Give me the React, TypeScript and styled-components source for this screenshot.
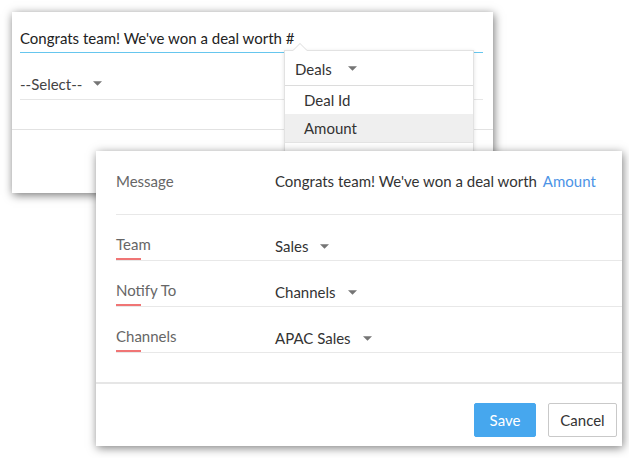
import styled, { createGlobalStyle } from 'styled-components';

const GlobalStyle = createGlobalStyle`
  html, body {
    margin: 0;
    padding: 0;
    background: #fff;
  }
  body {
    font-family: Lato, 'Open Sans', 'Liberation Sans', sans-serif;
    -webkit-font-smoothing: antialiased;
  }
`;

const Caret = () => (
  <CaretSvg viewBox="0 0 8 4" width="9" height="5">
    <path d="M0 0 L8 0 L4 4 Z" fill="currentColor" />
  </CaretSvg>
);

const formRows = [
  { label: 'Team', value: 'Sales' },
  { label: 'Notify To', value: 'Channels' },
  { label: 'Channels', value: 'APAC Sales' },
];

const App = () => {
  return (
    <>
      <GlobalStyle />
      <Stage>
        <BackPanel>
          <InputRow>Congrats team! We've won a deal worth #</InputRow>
          <SelectRow>
            --Select--
            <Caret />
          </SelectRow>
          <BackFooter />

          <Popup>
            <PopupHeader>
              Deals
              <Caret />
            </PopupHeader>
            <PopupItem>Deal Id</PopupItem>
            <PopupItem active>Amount</PopupItem>
            <PopupItem muted>Closing Date</PopupItem>
          </Popup>
        </BackPanel>

        <FrontPanel>
          <MessageRow>
            <Label>Message</Label>
            <MessageText>
              Congrats team! We've won a deal worth <Merge>Amount</Merge>
            </MessageText>
          </MessageRow>
          {formRows.map((row) => (
            <FieldRow key={row.label}>
              <FieldLabel>{row.label}</FieldLabel>
              <FieldValue>
                {row.value}
                <Caret />
              </FieldValue>
            </FieldRow>
          ))}
          <Spacer />
          <Footer>
            <Button primary>Save</Button>
            <Button>Cancel</Button>
          </Footer>
        </FrontPanel>
      </Stage>
    </>
  );
};

const Stage = styled.div`
  position: relative;
  width: 629px;
  height: 458px;
  overflow: hidden;
`;
const CaretSvg = styled.svg`
  color: #757575;
  margin-left: 12px;
  flex-shrink: 0;
`;
const BackPanel = styled.div`
  position: relative;
  margin: 12px 0 0 12px;
  width: 481px;
  height: 181px;
  background: #fff;
  box-shadow: 1px 2px 9px rgba(0, 0, 0, 0.55);
  display: flex;
  flex-direction: column;
  padding-top: 12px;
  box-sizing: border-box;
`;
const InputRow = styled.div`
  margin: 0 10px 0 8px;
  height: 29px;
  line-height: 18px;
  padding-top: 5px;
  box-sizing: border-box;
  border-bottom: 1px solid #66c6ee;
  color: #222;
  font-size: 15px;
`;
const SelectRow = styled.div`
  margin: 0 10px 0 8px;
  height: 47px;
  display: flex;
  align-items: flex-end;
  padding-bottom: 6px;
  box-sizing: border-box;
  border-bottom: 1px solid #e6e6e6;
  color: #444;
  font-size: 15px;
  line-height: 18px;
  svg {
    margin: 0 0 7px 11px;
  }
`;
const BackFooter = styled.div`
  margin-top: 29px;
  border-top: 1px solid #e2e2e2;
`;
const Popup = styled.div`
  position: absolute;
  left: 272px;
  top: 38px;
  width: 190px;
  height: 140px;
  background: #fff;
  border: 1px solid #e2e2e2;
  box-shadow: 0 1px 4px rgba(0, 0, 0, 0.12);
  box-sizing: border-box;

  &::before,
  &::after {
    content: '';
    position: absolute;
    left: 8px;
    width: 0;
    height: 0;
    border-left: 7px solid transparent;
    border-right: 7px solid transparent;
  }
  &::before {
    top: -8px;
    border-bottom: 7px solid #dcdcdc;
  }
  &::after {
    top: -7px;
    border-bottom: 7px solid #fff;
  }
`;
const PopupHeader = styled.div`
  height: 35px;
  padding: 1px 0 0 10px;
  display: flex;
  align-items: center;
  box-sizing: border-box;
  border-bottom: 1px solid #dcdcdc;
  font-size: 15px;
  color: #333;
  svg {
    margin-left: 16px;
  }
`;
const PopupItem = styled.div<{ active?: boolean; muted?: boolean }>`
  height: 28px;
  padding-left: 19px;
  display: flex;
  align-items: center;
  font-size: 15px;
  color: ${(props) => (props.muted ? '#999' : '#333')};
  background: ${(props) => (props.active ? '#efefef' : '#fff')};
  border-bottom: ${(props) => (props.active ? '1px solid #e4e4e4' : 'none')};
`;
const FrontPanel = styled.div`
  position: absolute;
  left: 96px;
  top: 151px;
  width: 526px;
  height: 295px;
  background: #fff;
  box-shadow: 1px 2px 9px rgba(0, 0, 0, 0.5);
  display: flex;
  flex-direction: column;
  padding-left: 20px;
  box-sizing: border-box;
`;
const MessageRow = styled.div`
  height: 64px;
  display: grid;
  grid-template-columns: 159px 1fr;
  padding-top: 21px;
  box-sizing: border-box;
  border-bottom: 1px solid #e8e8e8;
  line-height: 18px;
  font-size: 15px;
`;
const Label = styled.div`
  color: #666;
`;
const MessageText = styled.div`
  color: #333;
  white-space: nowrap;
`;
const Merge = styled.span`
  color: #4d94e6;
  margin-left: 2px;
`;
const FieldRow = styled.div`
  height: 46px;
  display: grid;
  grid-template-columns: 159px 1fr;
  box-sizing: border-box;
  border-bottom: 1px solid #e8e8e8;
  font-size: 15px;
  line-height: 18px;
`;
const FieldLabel = styled.div`
  color: #666;
  display: flex;
  flex-direction: column;
  padding-top: 20px;
  box-sizing: border-box;

  &::after {
    content: '';
    margin-top: auto;
    width: 25px;
    height: 2px;
    background: #f07575;
  }
`;
const FieldValue = styled.div`
  color: #333;
  display: flex;
  align-items: center;
  align-self: start;
  height: 18px;
  margin-top: 22px;
  svg {
    margin-left: 12px;
  }
`;
const Spacer = styled.div`
  height: 29px;
`;
const Footer = styled.div`
  margin-left: -20px;
  border-top: 2px solid #e6e6e6;
  display: flex;
  justify-content: flex-end;
  gap: 12px;
  padding: 19px 5px 0 0;
`;
const Button = styled.button<{ primary?: boolean }>`
  height: 34px;
  padding: 0;
  width: ${(props) => (props.primary ? '62px' : '69px')};
  border-radius: 2px;
  font-family: inherit;
  font-size: 15px;
  cursor: pointer;
  color: ${(props) => (props.primary ? '#fff' : '#333')};
  background: ${(props) => (props.primary ? '#46a7ee' : '#fff')};
  border: 1px solid ${(props) => (props.primary ? '#46a7ee' : '#c9c9c9')};
`;

export default App;
